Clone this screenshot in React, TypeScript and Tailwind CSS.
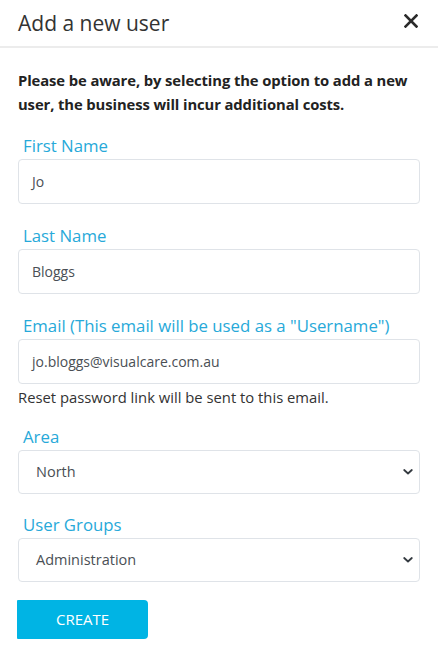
import React from "react";

const font = { fontFamily: '"Open Sans", "Noto Sans", sans-serif' };

function Label({ children }: { children: React.ReactNode }) {
  return (
    <div className="pl-[5px] text-[16.8px] leading-[22px] text-[#27a9d9] mb-[2px]">{children}</div>
  );
}

function Chevron() {
  return (
    <svg width="10" height="7" viewBox="0 0 10 7" className="absolute right-[6px] top-1/2 -translate-y-1/2">
      <path d="M1.2 1.5 L5 5 L8.8 1.5" fill="none" stroke="#343a40" strokeWidth="1.8" strokeLinecap="round" strokeLinejoin="round" />
    </svg>
  );
}

function Field({ value }: { value: string }) {
  return (
    <div className="h-[45px] border border-[#dfe3e8] rounded-[4px] flex items-center pl-[13px] text-[14px] text-[#4a4f55]">
      {value}
    </div>
  );
}

function Select({ value }: { value: string }) {
  return (
    <div className="relative h-[44px] border border-[#dfe3e8] rounded-[4px] flex items-center pl-[17px] text-[14.5px] text-[#4a4f55]">
      {value}
      <Chevron />
    </div>
  );
}

export default function App() {
  return (
    <div className="w-[438px] h-[651px] bg-white overflow-hidden" style={font}>
      <div className="h-[48px] border-b-[2px] border-[#ececec] flex items-center justify-between pl-[18px] pr-[20px]">
        <div className="text-[21px] text-[#333] font-normal leading-none mt-[1px]">Add a new user</div>
        <svg width="14" height="14" viewBox="0 0 14 14" className="-mt-[4px]">
          <path d="M1.5 1.5 L12.5 12.5 M12.5 1.5 L1.5 12.5" stroke="#2b2b2b" strokeWidth="2.6" strokeLinecap="square" />
        </svg>
      </div>
      <div className="px-[18px]">
        <p className="mt-[20px] text-[14.8px] leading-[24px] font-bold text-[#222] tracking-[-0.1px]">
          Please be aware, by selecting the option to add a new user, the business will incur additional costs.
        </p>
        <div className="mt-[19px]">
          <Label>First Name</Label>
          <Field value="Jo" />
        </div>
        <div className="mt-[21px]">
          <Label>Last Name</Label>
          <Field value="Bloggs" />
        </div>
        <div className="mt-[21px]">
          <Label>Email (This email will be used as a "Username")</Label>
          <Field value="jo.bloggs@visualcare.com.au" />
          <div className="text-[14.8px] text-[#333] leading-[24px] mt-[1px]">Reset password link will be sent to this email.</div>
        </div>
        <div className="mt-[17px]">
          <Label>Area</Label>
          <Select value="North" />
        </div>
        <div className="mt-[20px]">
          <Label>User Groups</Label>
          <Select value="Administration" />
        </div>
        <button className="mt-[18px] w-[131px] h-[39px] bg-[#00b4e4] text-white text-[15px] rounded-tr-[4px] rounded-br-[4px] rounded-tl-[1px] rounded-bl-[1px] flex items-center justify-center -ml-[1px]">
          CREATE
        </button>
      </div>
    </div>
  );
}
